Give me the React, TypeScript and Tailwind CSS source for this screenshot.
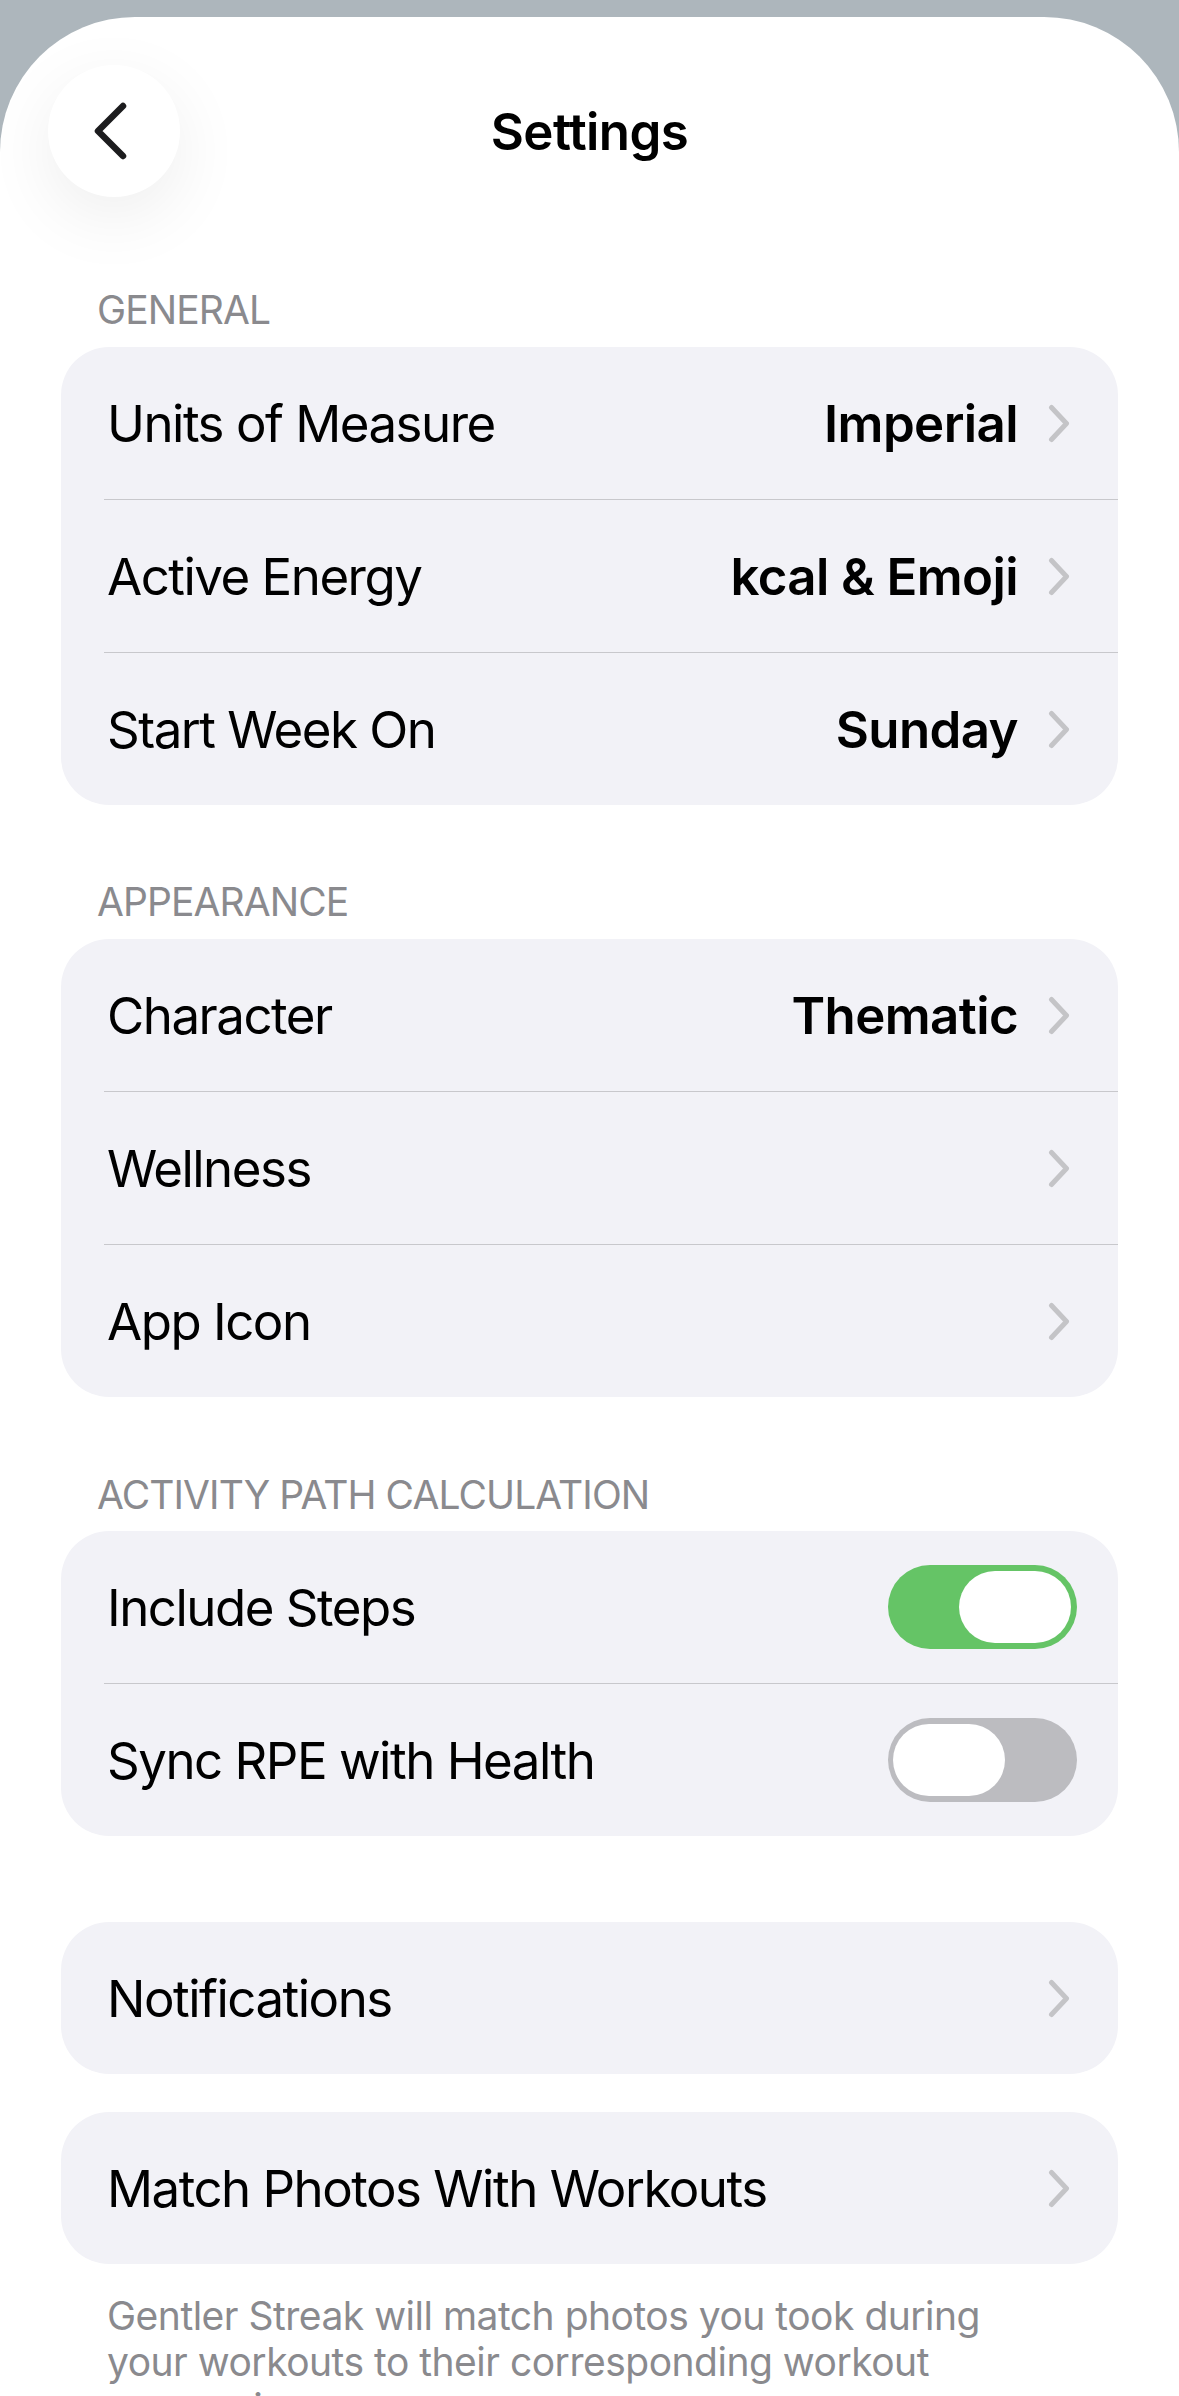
import React from 'react';

const font = { fontFamily: 'Inter, "Noto Sans", sans-serif' };

function Chevron() {
  return (
    <svg width="22" height="39" viewBox="0 0 22 39" fill="none" className="shrink-0">
      <path d="M3.5 3.5L18.5 19.5L3.5 35.5" stroke="#c4c4c7" strokeWidth="5" strokeLinecap="round" strokeLinejoin="round" />
    </svg>
  );
}

function Toggle({ on }: { on: boolean }) {
  return (
    <div
      className={
        on
          ? 'flex h-[84px] w-[189px] shrink-0 items-center justify-end rounded-full bg-[#65c466] px-[6px]'
          : 'flex h-[84px] w-[189px] shrink-0 items-center justify-start rounded-full bg-[#bcbcc0] px-[5px]'
      }
    >
      <div className="h-[72px] w-[112px] rounded-full bg-white" />
    </div>
  );
}

type Row = {
  label: string;
  value?: string;
  toggle?: boolean;
};

function Card({ rows }: { rows: Row[] }) {
  return (
    <div className="mx-[61px] overflow-hidden rounded-[48px] bg-[#f2f2f7]">
      {rows.map((row, i) => (
        <div key={row.label} className="ml-[43px]">
          <div
            className={
              'flex h-[152px] items-center pl-[3px] ' +
              (row.toggle === undefined ? 'pr-[48px] ' : 'pr-[41px] ') +
              (i < rows.length - 1 ? 'border-b border-[#c8c8cc] box-content' : '')
            }
          >
            <span className="flex-1 text-[51px] leading-none tracking-[-1.5px] text-black">{row.label}</span>
            {row.toggle !== undefined ? (
              <Toggle on={row.toggle} />
            ) : (
              <>
                {row.value && (
                  <span className="mr-[30px] text-[51px] font-semibold leading-none tracking-[-0.6px] text-black">
                    {row.value}
                  </span>
                )}
                <Chevron />
              </>
            )}
          </div>
        </div>
      ))}
    </div>
  );
}

function SectionTitle({ children, className }: { children: React.ReactNode; className: string }) {
  return (
    <div className={'ml-[97px] text-[39px] uppercase leading-[46px] tracking-[-0.9px] text-[#8a8a8e] ' + className}>
      {children}
    </div>
  );
}

export default function App() {
  return (
    <div className="min-h-screen bg-[#adb6bc] pt-[17px]" style={font}>
      <div className="min-h-[2379px] overflow-hidden rounded-t-[135px] bg-white pb-[40px]">
        {/* Header */}
        <div className="grid grid-cols-[132px_1fr_132px] items-center px-[48px] pt-[48px]">
          <button className="flex h-[132px] w-[132px] items-center justify-center rounded-full bg-white shadow-[0_20px_70px_rgba(0,0,0,0.07)]">
            <svg width="34" height="58" viewBox="0 0 34 58" fill="none" className="-ml-[9px]">
              <path d="M30 4L5 29L30 54" stroke="#1c1c1e" strokeWidth="6.5" strokeLinecap="round" strokeLinejoin="round" />
            </svg>
          </button>
          <h1 className="text-center text-[51px] font-semibold leading-none tracking-[-0.6px] text-black">Settings</h1>
          <div />
        </div>

        <SectionTitle className="mt-[90px] mb-[14px]">General</SectionTitle>
        <Card
          rows={[
            { label: 'Units of Measure', value: 'Imperial' },
            { label: 'Active Energy', value: 'kcal & Emoji' },
            { label: 'Start Week On', value: 'Sunday' },
          ]}
        />

        <SectionTitle className="mt-[74px] mb-[14px]">Appearance</SectionTitle>
        <Card
          rows={[
            { label: 'Character', value: 'Thematic' },
            { label: 'Wellness' },
            { label: 'App Icon' },
          ]}
        />

        <SectionTitle className="mt-[75px] mb-[13px]">Activity Path Calculation</SectionTitle>
        <Card
          rows={[
            { label: 'Include Steps', toggle: true },
            { label: 'Sync RPE with Health', toggle: false },
          ]}
        />

        <div className="mt-[86px]">
          <Card rows={[{ label: 'Notifications' }]} />
        </div>
        <div className="mt-[38px]">
          <Card rows={[{ label: 'Match Photos With Workouts' }]} />
        </div>

        <p className="ml-[107px] mr-[140px] mt-[29px] text-[39px] leading-[46px] tracking-[-0.5px] text-[#8a8a8e]">
          Gentler Streak will match photos you took during your workouts to their corresponding workout summaries.
        </p>
      </div>
    </div>
  );
}
